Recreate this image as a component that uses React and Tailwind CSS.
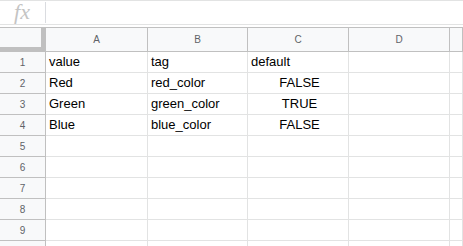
import React from 'react';

const COLUMNS = [
  { label: 'A', width: 'w-[102px]' },
  { label: 'B', width: 'w-[100px]' },
  { label: 'C', width: 'w-[101px]' },
  { label: 'D', width: 'w-[101px]' },
  { label: '', width: 'flex-1' }
];

const ROWS = [
  ['value', 'tag', 'default'],
  ['Red', 'red_color', 'FALSE'],
  ['Green', 'green_color', 'TRUE'],
  ['Blue', 'blue_color', 'FALSE'],
  [],
  [],
  [],
  [],
  [],
  []
];

const isBool = (v) => v === 'TRUE' || v === 'FALSE';

export default function App() {
  return (
    <div className="w-[463px] h-[246px] overflow-hidden bg-white font-['Liberation_Sans',Arial,sans-serif]">
      {/* formula bar */}
      <div className="flex h-[25px] border-t border-b border-[#e2e3e3]">
        <div className="w-[46px] flex items-center justify-center relative">
          <span className="font-['Liberation_Serif',serif] italic text-[22px] leading-none text-[#c4c4c4] -mt-[1px] -ml-[2px]">
            fx
          </span>
          <div className="absolute right-0 top-[1px] bottom-[1px] w-px bg-[#dadce0]" />
        </div>
        <div className="flex-1" />
      </div>

      <div className="h-[2px]" />

      {/* column headers */}
      <div className="flex h-[25px] border-t border-b border-[#c0c0c0] bg-[#f8f9fa]">
        <div className="w-[46px] flex">
          <div className="w-[45px] h-full border-r-[4px] border-b-[4px] border-[#c0c0c0] bg-[#f8f9fa]" />
          <div className="w-px h-full bg-[#c0c0c0]" />
        </div>
        {COLUMNS.map((c, i) => (
          <div
            key={i}
            className={`${c.width} flex items-center justify-center border-r border-[#c0c0c0] text-[10px] text-[#5f6368]`}
          >
            {c.label}
          </div>
        ))}
      </div>

      {/* rows (the 10th is only a sliver at the bottom edge) */}
      {ROWS.map((row, r) => (
        <div key={r} className="flex h-[21px]">
          <div className="w-[46px] flex items-center justify-center bg-[#f8f9fa] border-r border-b border-[#c0c0c0] text-[10px] text-[#5f6368]">
            {r < 9 ? r + 1 : ''}
          </div>
          {COLUMNS.map((c, i) => {
            const v = row[i];
            return (
              <div
                key={i}
                className={`${c.width} flex items-center border-r border-b border-[#e2e3e3] text-[13px] text-black pl-[3px] ${
                  isBool(v) ? 'justify-center' : ''
                }`}
              >
                {v}
              </div>
            );
          })}
        </div>
      ))}
    </div>
  );
}
